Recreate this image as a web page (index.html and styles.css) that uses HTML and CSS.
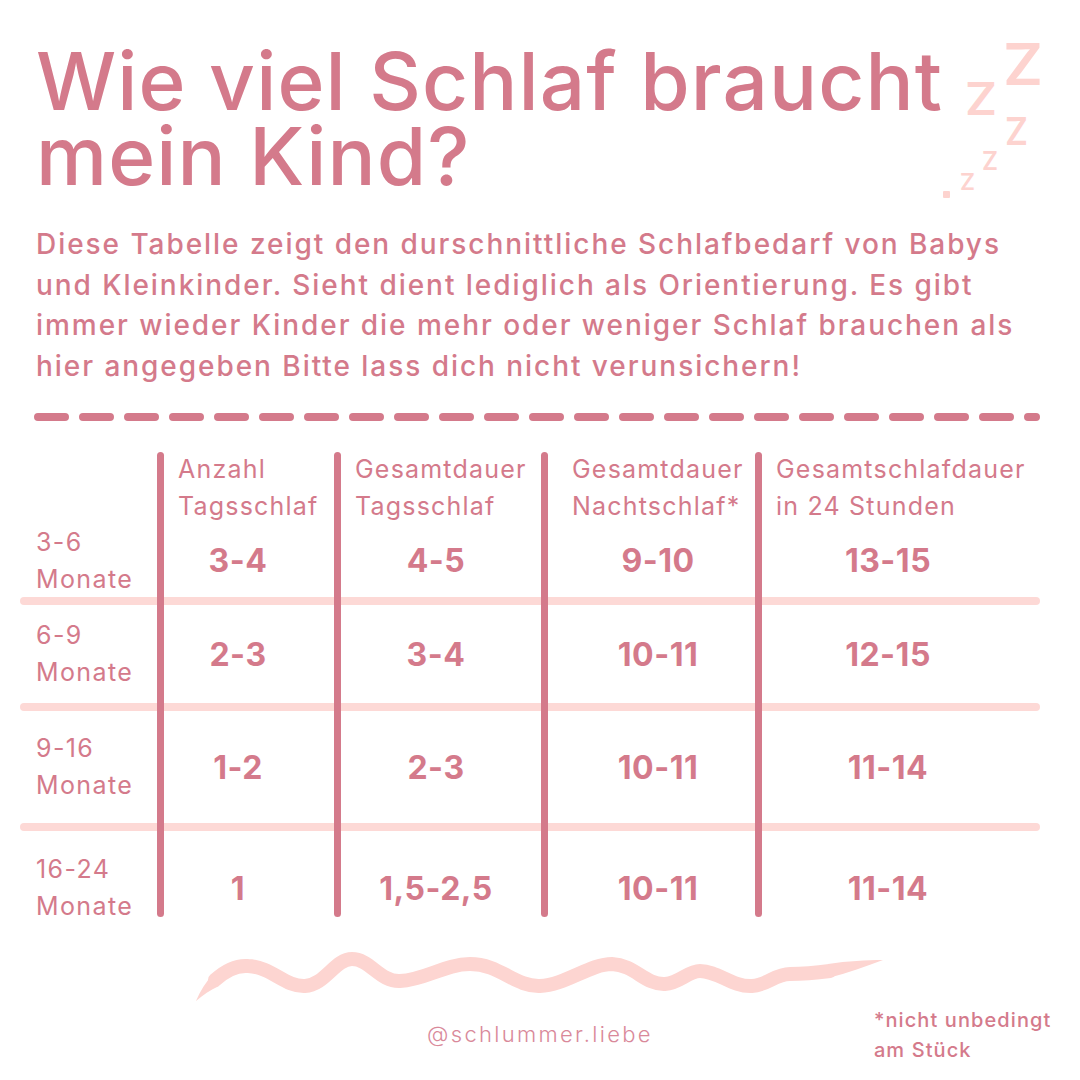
FILE: index.html
```html
<!DOCTYPE html>
<html lang="de">
<head>
<meta charset="utf-8">
<title>Wie viel Schlaf braucht mein Kind?</title>
<link rel="stylesheet" href="styles.css">
</head>
<body>
<main class="page">
  <svg class="zzz" viewBox="930 15 135 190" width="135" height="190" aria-hidden="true">
    <text x="1003" y="85" class="z z1" textLength="40" lengthAdjust="spacingAndGlyphs">Z</text>
    <text x="965" y="115" class="z z2" textLength="32" lengthAdjust="spacingAndGlyphs">Z</text>
    <text x="1005" y="145" class="z z3" textLength="23" lengthAdjust="spacingAndGlyphs">Z</text>
    <text x="982" y="170" class="z z4" textLength="16" lengthAdjust="spacingAndGlyphs">Z</text>
    <text x="960" y="190" class="z z5" textLength="15" lengthAdjust="spacingAndGlyphs">Z</text>
    <rect x="943" y="191" width="7" height="7" rx="1" class="zdot"/>
  </svg>

  <h1 class="title"><span class="tl">Wie viel Schlaf braucht</span><span class="tl">mein Kind?</span></h1>

  <p class="intro">Diese Tabelle zeigt den durschnittliche Schlafbedarf von Babys<br>und Kleinkinder. Sieht dient lediglich als Orientierung. Es gibt<br>immer wieder Kinder die mehr oder weniger Schlaf brauchen als<br>hier angegeben Bitte lass dich nicht verunsichern!</p>

  <svg class="dashes" width="1012" height="8" viewBox="0 0 1012 8" aria-hidden="true">
    <line x1="8" y1="4" x2="1006" y2="4" />
  </svg>

  <div class="table">
    <div class="bar bar1"></div>
    <div class="bar bar2"></div>
    <div class="bar bar3"></div>
    <div class="bar bar4"></div>
    <div class="sep sep1"></div>
    <div class="sep sep2"></div>
    <div class="sep sep3"></div>

    <div class="head"></div>
    <div class="head h1">Anzahl<br>Tagsschlaf</div>
    <div class="head h2">Gesamtdauer<br>Tagsschlaf</div>
    <div class="head h3">Gesamtdauer<br>Nachtschlaf*</div>
    <div class="head h4">Gesamtschlafdauer<br>in 24 Stunden</div>

    <div class="label">3-6<br>Monate</div>
    <div class="val v1">3-4</div>
    <div class="val v2">4-5</div>
    <div class="val v3">9-10</div>
    <div class="val v4">13-15</div>

    <div class="label">6-9<br>Monate</div>
    <div class="val v1">2-3</div>
    <div class="val v2">3-4</div>
    <div class="val v3">10-11</div>
    <div class="val v4">12-15</div>

    <div class="label">9-16<br>Monate</div>
    <div class="val v1">1-2</div>
    <div class="val v2">2-3</div>
    <div class="val v3">10-11</div>
    <div class="val v4">11-14</div>

    <div class="label last">16-24<br>Monate</div>
    <div class="val v1 last">1</div>
    <div class="val v2 last">1,5-2,5</div>
    <div class="val v3 last">10-11</div>
    <div class="val v4 last">11-14</div>
  </div>

  <svg class="wave" width="720" height="56" viewBox="180 950 720 56" aria-hidden="true">
    <path class="wave-main" d="M215 981 C 226 971, 236 966, 248 967 C 272 968, 285 988, 305 987 C 325 986, 335 960, 352 960 C 370 960, 380 983, 400 982 C 425 981, 445 965, 470 965 C 500 965, 515 988, 540 987 C 565 986, 590 965, 612 965 C 635 966, 645 986, 665 985 C 680 984, 688 972, 700 972 C 718 972, 732 988, 752 987 C 768 986, 775 975, 790 975 C 805 975, 815 974, 830 972"/>
    <path class="wave-tip" d="M196 1002 C 200 992, 206 983, 213 975 L 219 987 C 210 991, 203 996, 196 1002 Z"/>
    <path class="wave-tip" d="M828 965 C 848 962, 866 961, 883 961 C 866 967, 848 974, 828 979 Z"/>
  </svg>

  <footer class="footer">
    <span class="spacer"></span>
    <span class="handle">@schlummer.liebe</span>
    <span class="note">*nicht unbedingt<br>am Stück</span>
  </footer>
</main>
</body>
</html>
```

FILE: styles.css
```css
html, body {
  margin: 0;
  padding: 0;
  background: #ffffff;
}

.page {
  position: relative;
  width: 1080px;
  height: 1080px;
  overflow: hidden;
  font-family: "Inter", "Liberation Sans", sans-serif;
  color: #d47a8b;
}

.zzz {
  position: absolute;
  left: 930px;
  top: 15px;
}

.z {
  font-family: "Inter", "Liberation Sans", sans-serif;
  font-weight: 600;
  fill: #fdd3cf;
}
.z1 { font-size: 58px; }
.z2 { font-size: 45px; }
.z3 { font-size: 38px; }
.z4 { font-size: 25px; }
.z5 { font-size: 23px; }
.zdot { fill: #fdd3cf; }

.title {
  margin: 43px 0 0 36px;
  font-size: 80px;
  line-height: 75px;
  font-weight: 500;
  letter-spacing: 1.1px;
}
.tl {
  display: block;
  height: 75px;
}

.intro {
  margin: 31px 0 0 36px;
  font-size: 28px;
  line-height: 40.6px;
  font-weight: 500;
  letter-spacing: 1.95px;
  white-space: nowrap;
}

.dashes {
  display: block;
  margin: 27px 0 0 30px;
}
.dashes line {
  stroke: #d47a8b;
  stroke-width: 8;
  stroke-linecap: round;
  stroke-dasharray: 27 18;
}

.table {
  display: grid;
  margin: 31px 0 0 20px;
  width: 1020px;
  grid-template-columns: 137px 7px 170px 7px 200px 7px 207px 7px 278px;
  grid-template-rows: 72px 73px 8px 98px 8px 112px 8px 86px;
}

.bar {
  grid-row: 1 / -1;
  background: #d47a8b;
  border-radius: 4px;
  z-index: 2;
}
.bar1 { grid-column: 2 / 3; }
.bar2 { grid-column: 4 / 5; }
.bar3 { grid-column: 6 / 7; }
.bar4 { grid-column: 8 / 9; }

.sep {
  grid-column: 1 / -1;
  background: #fdd9d6;
  border-radius: 4px;
  z-index: 1;
}
.sep1 { grid-row: 3 / 4; }
.sep2 { grid-row: 5 / 6; }
.sep3 { grid-row: 7 / 8; }

.head {
  align-self: start;
  font-size: 25px;
  line-height: 37px;
  font-weight: 400;
  letter-spacing: 1.2px;
  white-space: nowrap;
  margin-top: -1px;
}
.h1, .h2, .h4 { padding-left: 14px; }
.h3 { padding-left: 24px; }

.label {
  align-self: center;
  padding-left: 16px;
  font-size: 25px;
  line-height: 37px;
  font-weight: 400;
  letter-spacing: 1.4px;
}

.val {
  align-self: center;
  text-align: center;
  font-size: 32px;
  font-weight: 700;
  letter-spacing: 0.5px;
}
.v1 { padding-right: 22px; }
.v2 { padding-right: 10px; }
.v3 { padding-left: 13px; }
.v4 { padding-right: 26px; }
.last { padding-top: 28px; }

.wave {
  display: block;
  margin: 32px 0 0 180px;
}
.wave-main {
  fill: none;
  stroke: #fdd5d1;
  stroke-width: 14;
  stroke-linecap: round;
  stroke-linejoin: round;
}
.wave-tip {
  fill: #fdd5d1;
  stroke: none;
}

.footer {
  display: grid;
  grid-template-columns: 1fr auto 1fr;
  align-items: center;
  width: 1080px;
}
.handle {
  font-size: 22px;
  font-weight: 300;
  letter-spacing: 2.3px;
  color: #d9899a;
  margin-top: -2px;
}
.note {
  padding-left: 221px;
  font-size: 20px;
  line-height: 30px;
  font-weight: 500;
  letter-spacing: 1.1px;
  white-space: nowrap;
}
```
